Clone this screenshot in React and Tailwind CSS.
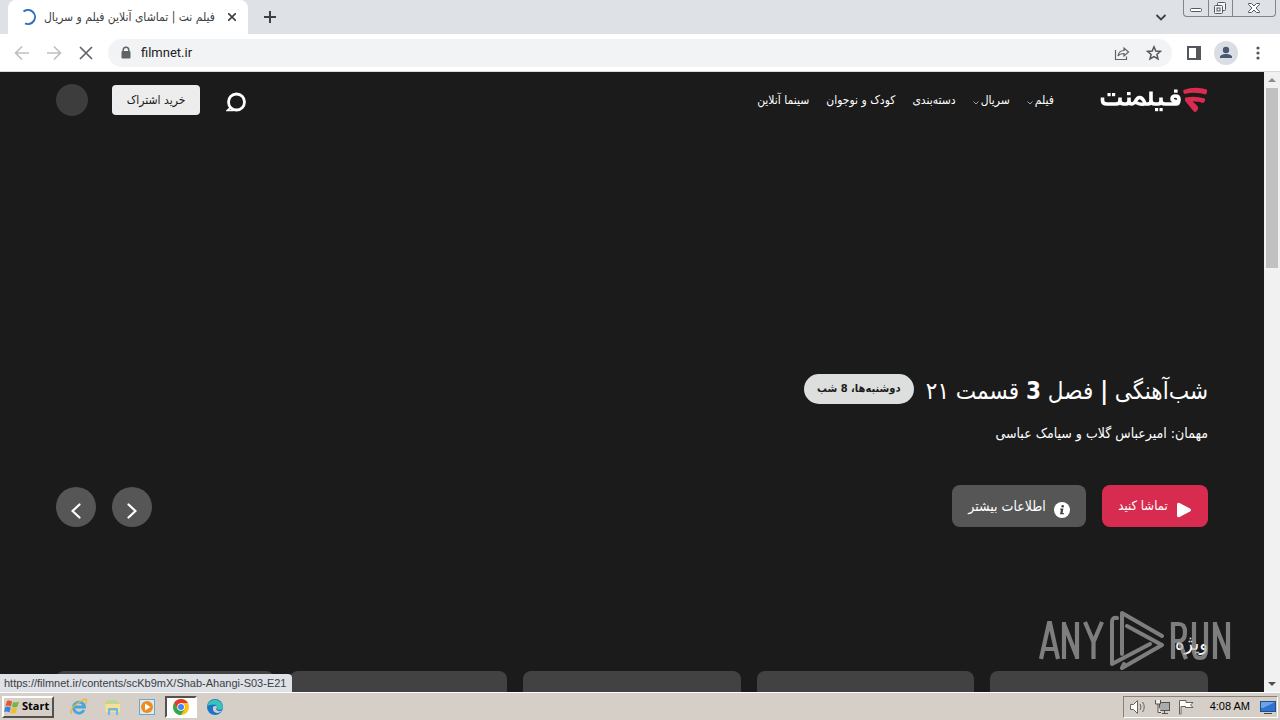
import React from "react";

const faFont = "font-['DejaVu_Sans_Condensed','DejaVu_Sans',sans-serif]";

function TabStrip() {
  return (
    <div className="flex h-[34px] shrink-0 items-stretch bg-[#dee1e6]">
      <div className="ml-2 flex w-60 items-center rounded-t-lg bg-white pl-3 pr-2">
        <svg className="size-4 shrink-0" viewBox="0 0 16 16" fill="none" stroke="#2f6fc0" strokeWidth="2">
          <path d="M3.5 2.6A7 7 0 1 1 5 14.3" />
        </svg>
        <h2 dir="rtl" className="ml-2 flex-1 whitespace-nowrap text-left font-['DejaVu_Sans_Condensed','DejaVu_Sans',sans-serif] text-xs text-[#3c4043]">
          فیلم نت | تماشای آنلاین فیلم و سریال
        </h2>
        <button aria-label="Close tab" className="ml-1 flex size-4 items-center justify-center">
          <svg className="size-2" viewBox="0 0 8 8" stroke="#3c4043" strokeWidth="1.6">
            <path d="M0 0L8 8M8 0L0 8" />
          </svg>
        </button>
      </div>
      <button aria-label="New tab" className="ml-4 flex w-3 items-center justify-center">
        <svg className="size-3" viewBox="0 0 12 12" stroke="#3c4043" strokeWidth="2">
          <path d="M6 0V12M0 6H12" />
        </svg>
      </button>
      <div className="flex-1" />
      <button aria-label="Search tabs" className="mr-4 flex w-3 items-center justify-center">
        <svg className="size-3" viewBox="0 0 12 12" fill="none" stroke="#3c4043" strokeWidth="1.8">
          <path d="M1.5 4L6 8.5L10.500 4" />
        </svg>
      </button>
      <div className="mr-1 flex h-[17px] w-[93px] rounded-b-[4px] border border-t-0 border-[#80848b] bg-[#dee1e6]">
        <button aria-label="Minimize" className="flex flex-1 items-center justify-center border-r border-[#80848b]">
          <svg className="h-4 w-3" viewBox="0 0 12 16" fill="#fff" stroke="#555a62">
            <rect x="0.500" y="8.500" width="11" height="3" rx="1" />
          </svg>
        </button>
        <button aria-label="Restore" className="flex flex-1 items-center justify-center border-r border-[#80848b]">
          <svg className="h-4 w-3" viewBox="0 0 12 16" fill="#f4f5f7" stroke="#555a62">
            <rect x="3.500" y="2.500" width="8" height="8" rx="1" />
            <rect x="0.500" y="5.500" width="8" height="8" rx="1" />
            <rect x="3" y="8" width="3" height="3" />
          </svg>
        </button>
        <button aria-label="Close" className="flex w-[42px] items-center justify-center">
          <svg className="h-4 w-3" viewBox="0 0 12 16" fill="#fff" stroke="#555a62">
            <path d="M0.500 3.500H3.500L6 6L8.500 3.500H11.500V4.500L8 8L11.500 11.500V12.500H8.500L6 10L3.500 12.500H0.500V11.500L4 8L0.500 4.500Z" />
          </svg>
        </button>
      </div>
    </div>
  );
}

function Toolbar() {
  return (
    <div className="flex h-[38px] shrink-0 items-center border-b border-[#d8dadd] bg-white pl-3.5 pr-3.5">
      <div className="flex gap-4 text-[#bdc0c4]">
        <button aria-label="Back" className="size-4">
          <svg viewBox="0 0 16 16" fill="none" stroke="currentColor" strokeWidth="1.7">
            <path d="M15 8H2M8 1.500L1.500 8L8 14.500" />
          </svg>
        </button>
        <button aria-label="Forward" className="size-4">
          <svg viewBox="0 0 16 16" fill="none" stroke="currentColor" strokeWidth="1.7">
            <path d="M1 8H14M8 1.500L14.500 8L8 14.500" />
          </svg>
        </button>
        <button aria-label="Stop loading" className="size-4 text-[#5f6368]">
          <svg viewBox="0 0 16 16" fill="none" stroke="currentColor" strokeWidth="1.7">
            <path d="M2 2L14 14M14 2L2 14" />
          </svg>
        </button>
      </div>
      <div className="ml-3.5 flex h-7 flex-1 items-center rounded-full bg-[#f1f3f4] pl-3 pr-2.5">
        <svg className="h-3.5 w-3" viewBox="0 0 12 14">
          <path d="M3.200 6V4a2.800 2.800 0 0 1 5.600 0V6" fill="none" stroke="#5f6368" strokeWidth="1.500" />
          <rect x="1.500" y="5" width="9" height="7.500" rx="1" fill="#5f6368" />
        </svg>
        <input
          aria-label="Address"
          defaultValue="filmnet.ir"
          className="ml-[9px] min-w-0 flex-1 bg-transparent font-[Roboto,sans-serif] text-[13px] text-[#202124] outline-none"
        />
        <button aria-label="Share" className="size-4">
          <svg viewBox="0 0 16 16" fill="none" stroke="#5f6368" strokeWidth="1.200">
            <path d="M1.500 5V14.500H12.500V11.500M4 11C4.500 7.500 6.500 5.500 10 5.500V3L14.500 7L10 11V8.500C7.500 8.500 5.500 9 4 11Z" />
          </svg>
        </button>
        <button aria-label="Bookmark" className="ml-4 size-4">
          <svg viewBox="0 0 16 16" fill="none" stroke="#54585d" strokeWidth="1.500">
            <path d="M8 1.800L9.800 6L14.400 6.400L10.900 9.400L12 13.900L8 11.500L4 13.900L5.100 9.400L1.600 6.400L6.200 6Z" />
          </svg>
        </button>
      </div>
      <button aria-label="Side panel" className="ml-3.5 size-4">
        <svg viewBox="0 0 16 16" fill="none" stroke="#54585d" strokeWidth="2">
          <rect x="2" y="2" width="12" height="12" />
          <path d="M12 2V14" strokeWidth="4" />
        </svg>
      </button>
      <button aria-label="Profile" className="ml-3 size-6 overflow-hidden rounded-full bg-[#dadde3]">
        <svg viewBox="0 0 24 24" fill="#4a5672">
          <circle cx="12" cy="9" r="3.200" />
          <path d="M6 17V16C6 14 9 13 12 13S18 14 18 16V17Z" />
        </svg>
      </button>
      <button aria-label="Menu" className="ml-3 size-4">
        <svg viewBox="0 0 16 16" fill="#54585d">
          <circle cx="8" cy="3" r="1.600" />
          <circle cx="8" cy="8" r="1.600" />
          <circle cx="8" cy="13" r="1.600" />
        </svg>
      </button>
    </div>
  );
}

function Logo() {
  return (
    <a href="#home" aria-label="فیلم‌نت" className="block h-7 w-[108px]">
      <svg viewBox="0 0 108 28" fill="none">
        <g stroke="#fff" strokeWidth="3.600" strokeLinejoin="round">
          <path d="M2.500 11.500V14.500Q2.500 18 7 18H16Q20 18 20 14.500V11.500" />
          <path d="M20 14.500Q20 18 24 18H26Q29 18 29 14.500V11.500M29 14.500Q29 18 32 18Q34 18 36.500 13.500Q39 10 42 12.500Q46 16.500 43.500 18Q41 19 36 16.500M43 18H48Q51 18 51 14.500V5.500" />
          <path d="M51 14.500Q51 18 55 18H58Q61 18 61 14.500V11.500M61 14.500Q61 18 65 18H76Q79 18 79 13.500Q79 10 75.500 10Q72 10 72 13Q72 15.500 79 15.500" />
        </g>
        <g fill="#fff">
          <rect x="7.500" y="7" width="3.200" height="3.200" />
          <rect x="12" y="7" width="3.200" height="3.200" />
          <rect x="27" y="6" width="3.600" height="3.200" />
          <rect x="55" y="22" width="3.200" height="3.200" />
          <rect x="59.500" y="22" width="3.200" height="3.200" />
          <rect x="74" y="3.500" width="3.600" height="3.200" />
        </g>
        <g fill="#db2c4f">
          <path d="M83.500 4Q95 0 107 3.500Q107.500 6.500 106 8.500Q95 5.500 84.500 8Q82.500 6 83.500 4Z" />
          <path d="M85.500 11.500Q95 9.500 105 12.500Q105.500 15.500 103 17Q98 15.200 92.500 15.600L96 18.500Q98.500 20.500 98 23Q97 25.500 95.500 26Q94 26 93 24.500L86 16Q84 13.500 85.500 11.500Z" />
        </g>
      </svg>
    </a>
  );
}

function Caret() {
  return (
    <svg className="mt-1.5 h-1 w-1.5" viewBox="0 0 6 4" fill="none" stroke="#a3a3a3">
      <path d="M0.500 0.500L3 3L5.500 0.500" />
    </svg>
  );
}

const links = [
  { label: "فیلم", menu: true },
  { label: "سریال", menu: true },
  { label: "دسته‌بندی" },
  { label: "کودک و نوجوان" },
  { label: "سینما آنلاین" },
];

function SiteHeader() {
  return (
    <header className="flex h-14 shrink-0 items-center">
      <Logo />
      <nav className="mr-[46px] flex gap-[17px] text-xs text-white">
        {links.map((l) => (
          <a key={l.label} href="#menu" className="flex items-center gap-0.5 whitespace-nowrap">
            {l.label}
            {l.menu && <Caret />}
          </a>
        ))}
      </nav>
      <div className="mr-auto flex items-center">
        <button aria-label="جستجو" className="ml-[26px] mt-1 size-5">
          <svg viewBox="0 0 20 20" fill="none" stroke="#fff" strokeWidth="2.800">
            <circle cx="10.500" cy="10" r="8" />
            <path d="M5 15L1.200 18.400H7.500" strokeWidth="1.600" />
          </svg>
        </button>
        <button className="ml-6 h-[30px] w-[88px] whitespace-nowrap rounded bg-[#ededed] text-xs text-[#1b1b1b]">
          خرید اشتراک
        </button>
        <button aria-label="حساب کاربری" className="size-8 rounded-full bg-[#3d3d3d]" />
      </div>
    </header>
  );
}

function Hero() {
  return (
    <section className="mt-[243px] shrink-0 text-white">
      <div className="flex h-10 items-center gap-3">
        <h1 className="whitespace-nowrap text-2xl">
          شب‌آهنگی <b>|</b> فصل <b>3</b> قسمت ۲۱
        </h1>
        <span className="mb-1 flex h-[30px] w-[110px] items-center justify-center whitespace-nowrap rounded-full bg-[#dcdfdd] text-[11px] font-bold text-[#1b1b1b]">
          دوشنبه‌ها، 8 شب
        </span>
      </div>
      <p className="mt-3 text-sm leading-5">مهمان: امیرعباس گلاب و سیامک عباسی</p>
      <div className="mt-[42px] flex items-end gap-4">
        <button className="flex h-[42px] w-[106px] items-center justify-center gap-2 whitespace-nowrap rounded-lg bg-[#d72b50] text-[13px]">
          <svg className="mt-2 size-4" viewBox="0 0 16 16" fill="#fff">
            <path d="M1 2.500Q1 0 3.500 1L14 6.500Q16 8 14 9.500L3.500 15Q1 16 1 13.500Z" />
          </svg>
          تماشا کنید
        </button>
        <button className="flex h-[42px] w-[134px] items-center justify-center gap-2 whitespace-nowrap rounded-lg bg-[#565656] text-sm">
          <svg className="mt-2 size-4" viewBox="0 0 16 16">
            <circle cx="8" cy="8" r="8" fill="#fff" />
            <circle cx="8.700" cy="4.200" r="1.300" fill="#444" />
            <path d="M6.200 6.500H9.400L8.600 11H9.900V12.200H6L6.900 7.700H6.200Z" fill="#444" />
          </svg>
          اطلاعات بیشتر
        </button>
        <div className="mr-auto flex gap-4">
          <button aria-label="قبلی" className="flex size-10 items-center justify-center rounded-full bg-[#565656]">
            <svg className="mt-2 h-4 w-2.5" viewBox="0 0 10 16" fill="none" stroke="#fff" strokeWidth="2.200" strokeLinecap="round">
              <path d="M1.500 1.500L8.500 8L1.500 14.500" />
            </svg>
          </button>
          <button aria-label="بعدی" className="flex size-10 items-center justify-center rounded-full bg-[#565656]">
            <svg className="mt-2 h-4 w-2.5" viewBox="0 0 10 16" fill="none" stroke="#fff" strokeWidth="2.200" strokeLinecap="round">
              <path d="M8.500 1.500L1.500 8L8.500 14.500" />
            </svg>
          </button>
        </div>
      </div>
    </section>
  );
}

function Featured() {
  return (
    <section className="mt-[104px] shrink-0">
      <h2 className="text-xl leading-6 text-white">ویژه</h2>
      <div className="mt-4 grid grid-cols-5 gap-4">
        {[1, 2, 3, 4, 5].map((n) => (
          <a key={n} href="#item" aria-label={"ویژه " + n} className="h-32 rounded-lg bg-[#424242]" />
        ))}
      </div>
    </section>
  );
}

function Watermark() {
  return (
    <div className="pointer-events-none absolute bottom-5 right-[49px] opacity-70">
      <svg className="h-16 w-48" viewBox="0 0 192 64" fill="none" stroke="#a9a9a9">
        <g strokeWidth="4.200">
          <path d="M2 51L10 15H11L19 51M5 41H16" />
          <path d="M25 51V14M25 16L38 49M38 51V14" />
          <path d="M46 14L54.500 34V51M63 14L54.500 34" />
          <path d="M134 51V16H140Q146 16 146 24Q146 33 140 33H134M140 33L147 51" />
          <path d="M155 14V42Q155 50 161 50T167 42V14" />
          <path d="M176 51V14M176 16L189 49M189 51V14" />
        </g>
        <g strokeWidth="4" strokeLinejoin="round" strokeLinecap="round">
          <path d="M78 10Q73 9 73 14V56L111 36" />
          <path d="M83 46V5L123 28M88 18L123 37L83 60L85 56" />
        </g>
      </svg>
    </div>
  );
}

function Scrollbar() {
  return (
    <div className="flex w-4 shrink-0 flex-col items-center bg-[#f1f1f1]">
      <div className="flex h-4 items-center">
        <svg className="h-1 w-2" viewBox="0 0 8 4" fill="#8b8b8b"><path d="M0 4L4 0L8 4Z" /></svg>
      </div>
      <div className="h-[180px] w-3 bg-[#c1c1c1]" />
      <div className="mt-auto flex h-4 items-center">
        <svg className="h-1 w-2" viewBox="0 0 8 4" fill="#505050"><path d="M0 0L4 4L8 0Z" /></svg>
      </div>
    </div>
  );
}

function Taskbar() {
  return (
    <footer className="flex h-7 shrink-0 items-center border-t border-white bg-[#d5cfc8]">
      <button className="ml-0.5 flex h-[22px] w-[52px] items-center gap-0.5 whitespace-nowrap border-2 border-b-[#55524e] border-l-white border-r-[#55524e] border-t-white font-['Open_Sans',sans-serif] text-[11px] font-bold text-black">
        <svg className="size-4 shrink-0" viewBox="0 0 16 16">
          <path d="M3 2Q5 1 8 2.500L7 7.500Q4 6 1.500 7Z" fill="#e4562c" />
          <path d="M9 3Q12 4 15 2.500L13.500 7.500Q11 9 8 8Z" fill="#74b63e" />
          <path d="M1.300 8Q4 7 6.800 8.500L5.500 13.500Q3 12 0 13Z" fill="#3b83d3" />
          <path d="M7.800 9Q10.500 10 13.300 8.600L12 13.500Q9.500 15 6.500 14Z" fill="#f4bd2c" />
        </svg>
        Start
      </button>
      <div className="ml-2 flex items-center">
        <button aria-label="Internet Explorer" className="flex h-[22px] w-[34px] items-center justify-center">
          <svg className="size-[18px]" viewBox="0 0 18 18" fill="none">
            <path d="M14 12A5.500 5.500 0 1 1 14.500 9H5" stroke="#43a6dc" strokeWidth="2.800" />
            <path d="M1.500 16Q-1 11 8 5T16.500 2.500T15 6" stroke="#e9b83c" strokeWidth="1.400" />
          </svg>
        </button>
        <button aria-label="Explorer" className="flex h-[22px] w-[34px] items-center justify-center">
          <svg className="size-[18px]" viewBox="0 0 18 18">
            <path d="M2 3H7L8 4.500H15V14H2Z" fill="#e8c765" />
            <path d="M4 2H13V7H4Z" fill="#b8d99b" />
            <path d="M1.500 6H16V14H1.500Z" fill="#f5e09a" />
            <path d="M4 17V11Q4 10 5 10H13Q14 10 14 11V17H12V12.500H6V17Z" fill="#72b8df" />
          </svg>
        </button>
        <button aria-label="Media Player" className="flex h-[22px] w-[34px] items-center justify-center">
          <svg className="size-[18px]" viewBox="0 0 18 18">
            <rect x="1.500" y="1.500" width="15" height="15" fill="#d9ebf5" stroke="#6da5cb" />
            <circle cx="9" cy="9" r="6" fill="#f08c1d" />
            <path d="M7 5.500L12.500 9L7 12.500Z" fill="#fff" />
          </svg>
        </button>
        <button aria-label="Chrome" className="mx-px flex h-[22px] w-8 items-center justify-center border-2 border-b-white border-l-[#55524e] border-r-white border-t-[#55524e] bg-white">
          <svg className="size-4" viewBox="0 0 16 16">
            <circle cx="8" cy="8" r="8" fill="#fbc116" />
            <path d="M1.100 4A8 8 0 0 1 14.900 4H8L4.500 10Z" fill="#e33b2e" />
            <path d="M1.100 4A8 8 0 0 0 8 16L11.500 10L8 12L4.500 10Z" fill="#2da94f" />
            <circle cx="8" cy="8" r="3.800" fill="#fff" />
            <circle cx="8" cy="8" r="3" fill="#4285f4" />
          </svg>
        </button>
        <button aria-label="Edge" className="flex h-[22px] w-[34px] items-center justify-center">
          <svg className="size-4" viewBox="0 0 16 16">
            <circle cx="8" cy="8" r="8" fill="#1873c9" />
            <path d="M0.200 7A8 8 0 0 1 16 8Q15.500 11 12 11Q9.500 11 10.500 8.500Q10 5.500 6.500 5.500Q2.500 5.500 0.200 7Z" fill="#39c4b7" />
            <path d="M6 8Q5 13 10 14Q13 14 15 11.500Q11 13 9.500 11Q8.500 9 10.500 8Q8 6 6 8Z" fill="#d5cfc8" />
          </svg>
        </button>
      </div>
      <div className="ml-auto mr-0.5 flex h-[22px] items-center border border-b-white border-l-[#86827c] border-r-white border-t-[#86827c] pl-1.5">
        <svg className="size-4" viewBox="0 0 16 16" fill="#fff" stroke="#66645f">
          <path d="M0.500 5.500H3.500L7.500 1.500V14.500L3.500 10.500H0.500Z" />
          <path d="M10 5Q12 8 10 11M12.500 3Q16 8 12.500 13" fill="none" />
        </svg>
        <svg className="ml-2 size-4" viewBox="0 0 16 16" fill="#eee" stroke="#55534f">
          <rect x="5.500" y="3.500" width="10" height="8" fill="#aaa" />
          <path d="M1.500 1V5H6.500V1M4 5V13.500H7M8 14.500H14M10.500 12V14" />
        </svg>
        <svg className="ml-2 size-4" viewBox="0 0 16 16" fill="#fff" stroke="#66645f">
          <path d="M1.500 15V1.500H8V3.500H15L12.500 6L15 8.500H7.500V7.500H3V15Z" />
        </svg>
        <time className="ml-4 whitespace-nowrap font-['Liberation_Sans',sans-serif] text-[11px] text-black">4:08 AM</time>
        <svg className="ml-2.5 mr-px size-4" viewBox="0 0 16 16">
          <rect x="0.500" y="2.500" width="15" height="10" fill="#2d73d1" stroke="#234d8c" />
          <path d="M1 3H15L3 9H1Z" fill="#6aa4e8" />
          <path d="M4 14.500H12" stroke="#444" />
        </svg>
      </div>
    </footer>
  );
}

export default function App() {
  return (
    <div className="flex h-screen flex-col overflow-hidden bg-white">
      <TabStrip />
      <Toolbar />
      <div className="relative flex min-h-0 flex-1">
        <main dir="rtl" lang="fa" className={"flex min-w-0 flex-1 flex-col overflow-hidden bg-[#1b1b1b] px-14 " + faFont}>
          <SiteHeader />
          <Hero />
          <Featured />
        </main>
        <Scrollbar />
        <Watermark />
        <div className="absolute bottom-0 left-0 flex h-[18px] items-center whitespace-nowrap rounded-tr bg-[#dee1e6] pl-1 pr-1.5 font-['Liberation_Sans',sans-serif] text-[11px] text-[#3c4043]">
          https://filmnet.ir/contents/scKb9mX/Shab-Ahangi-S03-E21
        </div>
      </div>
      <Taskbar />
    </div>
  );
}
